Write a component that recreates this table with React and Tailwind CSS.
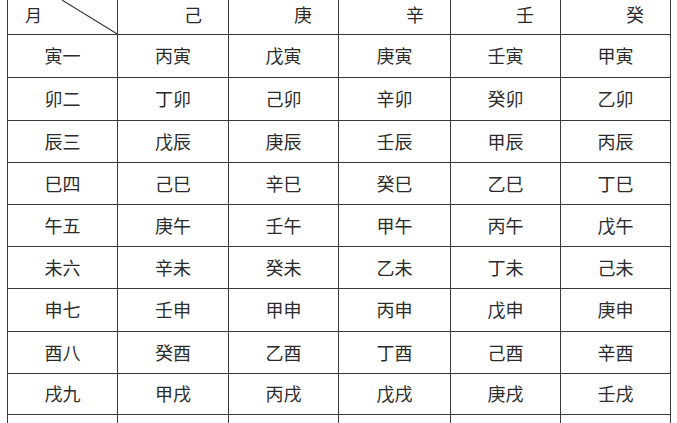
// column widths and row heights measured off the scan
const colW = ['w-[110px]', 'w-[111px]', 'w-[110px]', 'w-[112px]', 'w-[110px]', 'w-[110px]']
const rowH = ['h-[43px]', 'h-[43px]', 'h-[42px]', 'h-[42px]', 'h-[42px]', 'h-[42px]', 'h-[43px]', 'h-[42px]', 'h-[41px]', 'h-[42px]']

const heads = ['己', '庚', '辛', '壬', '癸']

const rows = [
  ['寅一', '丙寅', '戊寅', '庚寅', '壬寅', '甲寅'],
  ['卯二', '丁卯', '己卯', '辛卯', '癸卯', '乙卯'],
  ['辰三', '戊辰', '庚辰', '壬辰', '甲辰', '丙辰'],
  ['巳四', '己巳', '辛巳', '癸巳', '乙巳', '丁巳'],
  ['午五', '庚午', '壬午', '甲午', '丙午', '戊午'],
  ['未六', '辛未', '癸未', '乙未', '丁未', '己未'],
  ['申七', '壬申', '甲申', '丙申', '戊申', '庚申'],
  ['酉八', '癸酉', '乙酉', '丁酉', '己酉', '辛酉'],
  ['戌九', '甲戌', '丙戌', '戊戌', '庚戌', '壬戌'],
  ['亥十', '乙亥', '丁亥', '己亥', '辛亥', '癸亥'],
]

const App = () => {
  return (
    <div className="w-[677px] h-[423px] overflow-hidden bg-white text-[#2b2b2b] font-['Liberation_Serif','Noto_Sans_CJK_SC',serif]">
      <div className="ml-[7px] border-l border-[#3a3a3a] w-fit">
        {/* header row, diagonal cell */}
        <div className="flex h-[35px]">
          <div className="relative w-[110px] border-r border-b border-[#3a3a3a] flex items-center pl-[17px] text-[17px] pb-[1px]">
            <span>月</span>
            <svg className="absolute left-0 top-0" width="110" height="35" viewBox="0 0 110 35">
              <line x1="54" y1="0" x2="110" y2="34.5" stroke="#3a3a3a" strokeWidth="1.1" />
            </svg>
          </div>
          {heads.map((h, i) => (
            <div
              key={h}
              className={`${colW[i + 1]} border-r border-b border-[#3a3a3a] flex items-center justify-end pr-[26px] text-[18px] pb-[2px]`}
            >
              {h}
            </div>
          ))}
        </div>

        {/* months */}
        {rows.map((row, r) => (
          <div key={row[0]} className={`flex ${rowH[r]}`}>
            {row.map((cell, c) => (
              <div
                key={c}
                className={`${colW[c]} border-r border-b border-[#3a3a3a] flex items-center justify-center text-[18px] pt-[3px]`}
              >
                {cell}
              </div>
            ))}
          </div>
        ))}
      </div>
    </div>
  )
}

export default App
